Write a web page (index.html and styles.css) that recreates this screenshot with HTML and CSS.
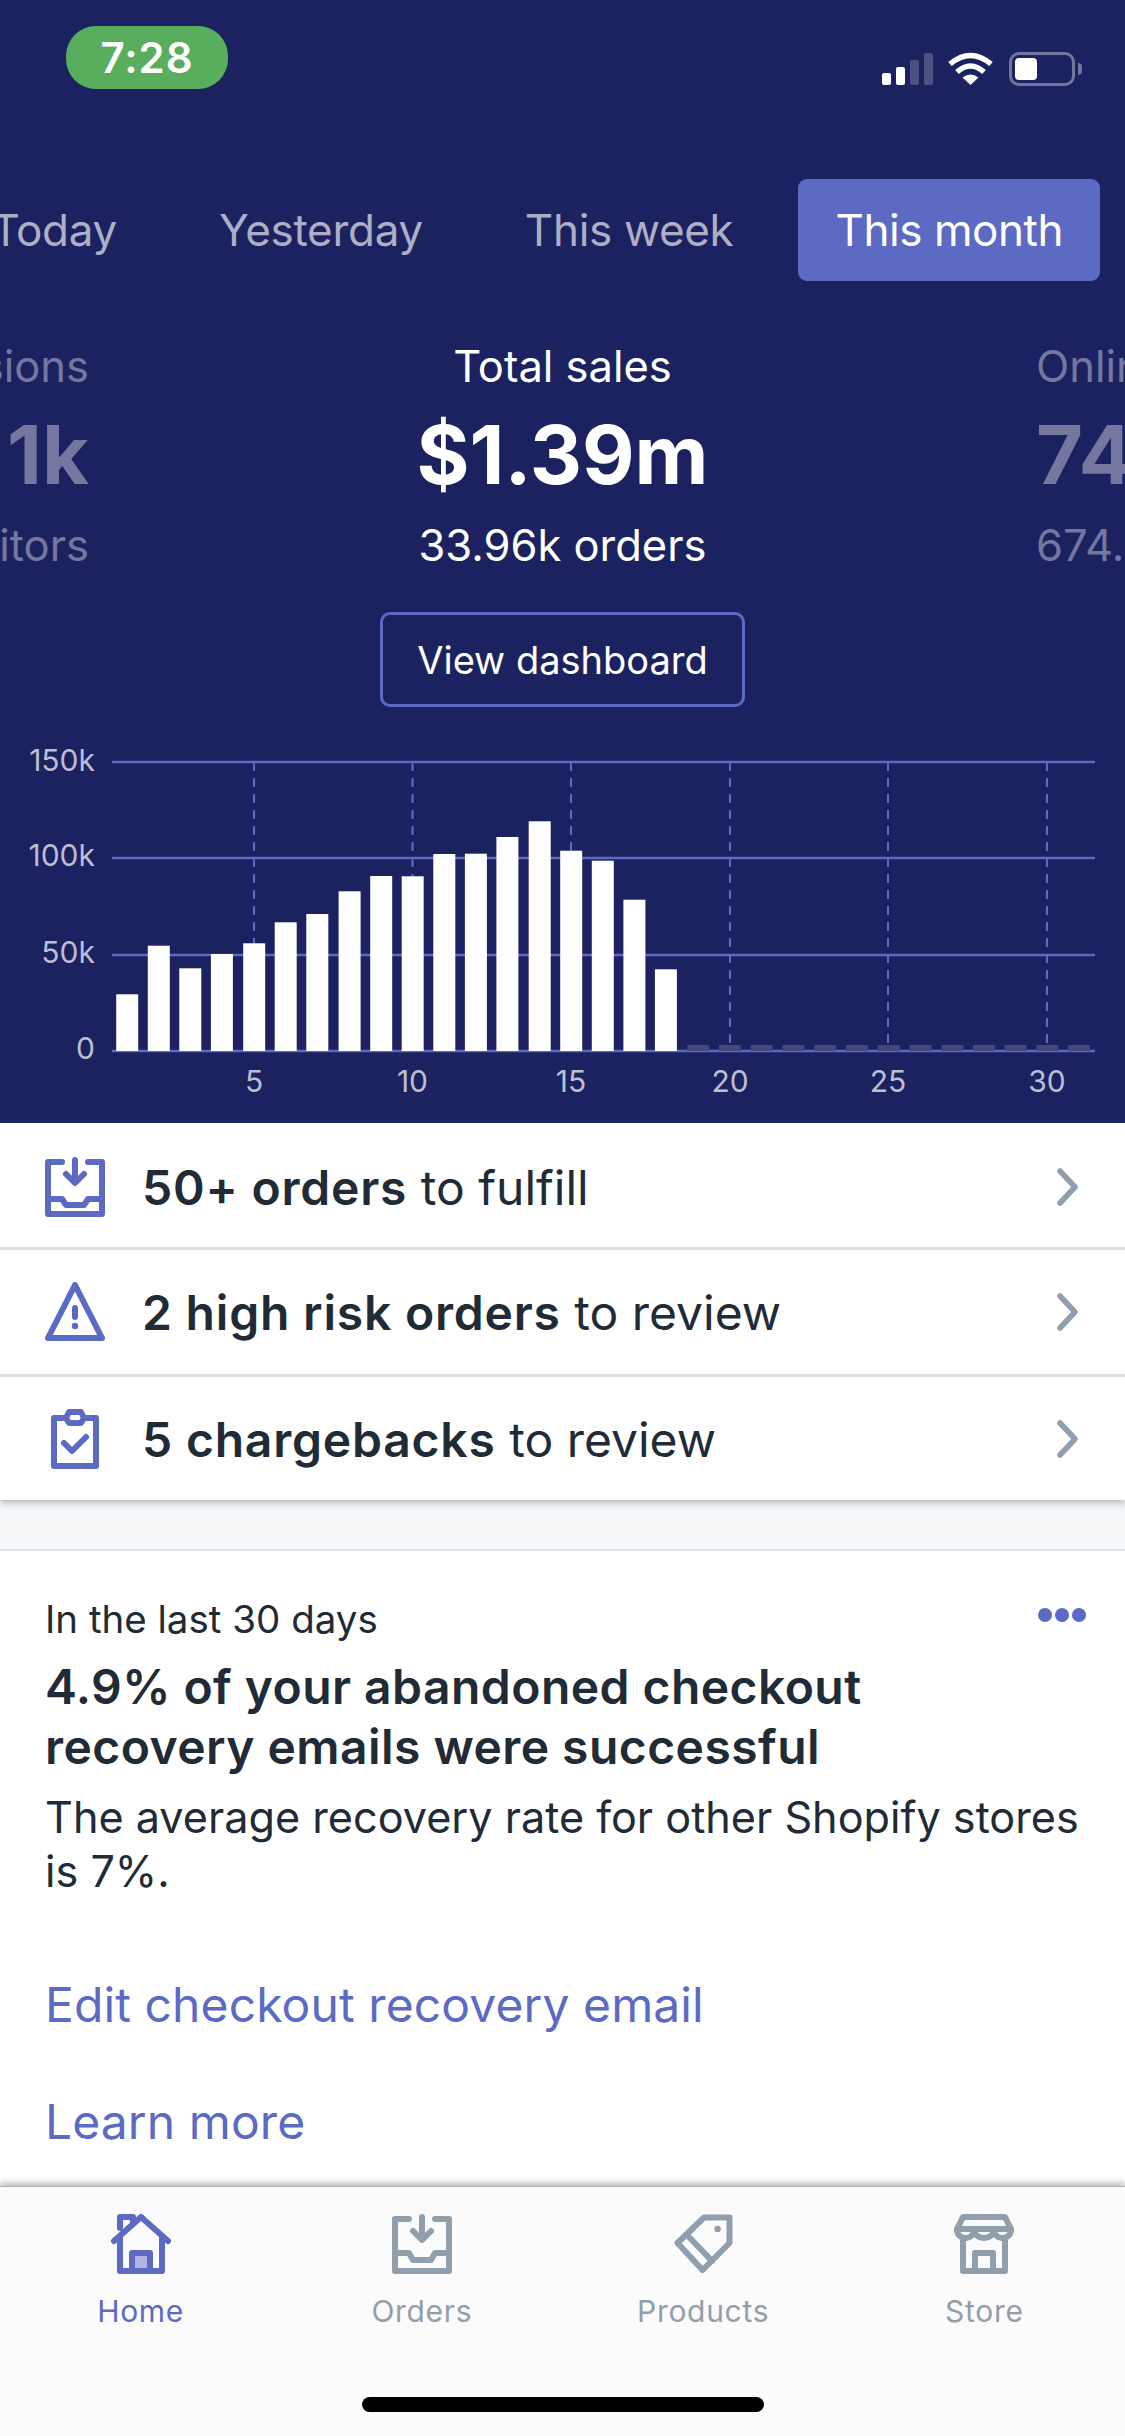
FILE: index.html
```html
<!DOCTYPE html>
<html lang="en">
<head>
    <meta charset="UTF-8">
    <meta name="viewport" content="width=device-width, initial-scale=1.0">
    <title>Home</title>
    <link rel="stylesheet" href="styles.css">
</head>
<body>
    <div class="hero">
        <div class="status-bar">
            <div class="time-pill">7:28</div>
            <div class="status-icons">
                <div class="signal">
                    <span class="sig-1"></span>
                    <span class="sig-2"></span>
                    <span class="sig-3"></span>
                    <span class="sig-4"></span>
                </div>
                <svg class="wifi" width="45" height="33" viewBox="0 0 45 33">
                    <path d="M2 12 Q22.5 -5 43 12" fill="none" stroke="#fff" stroke-width="5.5"/>
                    <path d="M9 20 Q22.5 8 36 20" fill="none" stroke="#fff" stroke-width="5.5"/>
                    <path d="M14.5 25.5 Q22.5 19.5 30.5 25.5 L22.5 33 Z" fill="#fff"/>
                </svg>
                <div class="battery"><div class="battery-fill"></div></div>
                <div class="battery-nub"></div>
            </div>
        </div>

        <div class="range-tabs">
            <div class="range-tab">Today</div>
            <div class="range-tab">Yesterday</div>
            <div class="range-tab">This week</div>
            <div class="range-tab active">This month</div>
        </div>

        <div class="stats">
            <div class="stat side left">
                <div class="stat-label">Sessions</div>
                <div class="stat-value">1k</div>
                <div class="stat-sub">Visitors</div>
            </div>
            <div class="stat main">
                <div class="stat-label">Total sales</div>
                <div class="stat-value">$1.39m</div>
                <div class="stat-sub">33.96k orders</div>
            </div>
            <div class="stat side right">
                <div class="stat-label">Online</div>
                <div class="stat-value">742k</div>
                <div class="stat-sub">674.2k</div>
            </div>
        </div>

        <div class="dashboard-wrap">
            <a class="dashboard-btn">View dashboard</a>
        </div>

        <svg class="chart" width="1125" height="400" viewBox="0 0 1125 400">
            <g class="grid-x">
                <line x1="254" y1="39" x2="254" y2="328"/>
                <line x1="412.5" y1="39" x2="412.5" y2="328"/>
                <line x1="571" y1="39" x2="571" y2="328"/>
                <line x1="730" y1="39" x2="730" y2="328"/>
                <line x1="888" y1="39" x2="888" y2="328"/>
                <line x1="1047" y1="39" x2="1047" y2="328"/>
            </g>
            <g class="grid-y">
                <line x1="112" y1="39" x2="1095" y2="39"/>
                <line x1="112" y1="135" x2="1095" y2="135"/>
                <line x1="112" y1="232" x2="1095" y2="232"/>
                <line x1="112" y1="328" x2="1095" y2="328"/>
            </g>
            <g class="bars">
                <rect x="116.2" y="271.3" width="22" height="56.7"/>
                <rect x="147.8" y="222.7" width="22" height="105.3"/>
                <rect x="179.3" y="245.3" width="22" height="82.7"/>
                <rect x="210.9" y="231" width="22" height="97"/>
                <rect x="243.2" y="220.3" width="22" height="107.7"/>
                <rect x="274.7" y="199.3" width="22" height="128.7"/>
                <rect x="306.3" y="191" width="22" height="137"/>
                <rect x="338.6" y="168.3" width="22" height="159.7"/>
                <rect x="370.2" y="153" width="22" height="175"/>
                <rect x="401.7" y="153.3" width="22" height="174.7"/>
                <rect x="433.3" y="131" width="22" height="197"/>
                <rect x="464.9" y="130.7" width="22" height="197.3"/>
                <rect x="496.4" y="114" width="22" height="214"/>
                <rect x="528.7" y="98.3" width="22" height="229.7"/>
                <rect x="560.2" y="127.7" width="22" height="200.3"/>
                <rect x="591.8" y="137.7" width="22" height="190.3"/>
                <rect x="623.4" y="176.7" width="22" height="151.3"/>
                <rect x="654.9" y="246.3" width="22" height="81.7"/>
            </g>
            <g class="ghost-bars">
                <rect x="687.2" y="322" width="22" height="6"/>
                <rect x="718.9" y="322" width="22" height="6"/>
                <rect x="750.7" y="322" width="22" height="6"/>
                <rect x="782.4" y="322" width="22" height="6"/>
                <rect x="814.2" y="322" width="22" height="6"/>
                <rect x="845.9" y="322" width="22" height="6"/>
                <rect x="877.7" y="322" width="22" height="6"/>
                <rect x="909.4" y="322" width="22" height="6"/>
                <rect x="941.2" y="322" width="22" height="6"/>
                <rect x="972.9" y="322" width="22" height="6"/>
                <rect x="1004.7" y="322" width="22" height="6"/>
                <rect x="1036.4" y="322" width="22" height="6"/>
                <rect x="1068" y="322" width="22" height="6"/>
            </g>
            <g class="axis-y">
                <text x="95" y="48">150k</text>
                <text x="95" y="143">100k</text>
                <text x="95" y="240">50k</text>
                <text x="95" y="336">0</text>
            </g>
            <g class="axis-x">
                <text x="254" y="369">5</text>
                <text x="412.5" y="369">10</text>
                <text x="571" y="369">15</text>
                <text x="730" y="369">20</text>
                <text x="888" y="369">25</text>
                <text x="1047" y="369">30</text>
            </g>
        </svg>
    </div>

    <div class="todo-list">
        <div class="todo-row first">
            <svg class="icon-60" viewBox="0 0 60 60">
                <path d="M17 5 H3 V57 H57 V5 H43 M3 42 H17 L21 48 H39 L43 42 H57 M30 3 V25 M21 17 L30 26 L39 17"/>
            </svg>
            <div class="todo-text"><b>50+ orders</b> to fulfill</div>
            <svg class="chevron" viewBox="0 0 21 38"><path d="M3 3 L18 19 L3 35"/></svg>
        </div>
        <div class="todo-row">
            <svg class="icon-60" viewBox="0 0 60 60">
                <path d="M30 3 L57 56 H3 Z M30 26 V35"/>
                <circle cx="30" cy="44" r="3.2"/>
            </svg>
            <div class="todo-text"><b>2 high risk orders</b> to review</div>
            <svg class="chevron" viewBox="0 0 21 38"><path d="M3 3 L18 19 L3 35"/></svg>
        </div>
        <div class="todo-row last">
            <svg class="icon-60" viewBox="0 0 60 60">
                <path d="M20 9 H9 V57 H51 V9 H40 M21 9 L24 3 H36 L39 9 L36 14 H24 Z M19 34 L27 42 L41 28"/>
            </svg>
            <div class="todo-text"><b>5 chargebacks</b> to review</div>
            <svg class="chevron" viewBox="0 0 21 38"><path d="M3 3 L18 19 L3 35"/></svg>
        </div>
    </div>

    <div class="gap"></div>

    <div class="insight-card">
        <div class="insight-head">
            <div class="insight-meta">In the last 30 days</div>
            <div class="more-dots"><span></span><span></span><span></span></div>
        </div>
        <div class="insight-title">4.9% of your abandoned checkout<br>recovery emails were successful</div>
        <div class="insight-body">The average recovery rate for other Shopify stores is 7%.</div>
        <a class="insight-link first">Edit checkout recovery email</a>
        <a class="insight-link">Learn more</a>
    </div>

    <div class="tab-bar">
        <div class="tabs">
            <div class="tab active">
                <svg class="icon-60" viewBox="0 0 60 60">
                    <path d="M21 57 V39 H39 V57" class="door-fill"/>
                    <path d="M3 27 L30 3 L57 27 M9 22 V57 H51 V22 M9 14 V3 H22 V9"/>
                </svg>
                <div class="tab-label">Home</div>
            </div>
            <div class="tab">
                <svg class="icon-60" viewBox="0 0 60 60">
                    <path d="M17 5 H3 V57 H57 V5 H43 M3 39 H17 L21 46 H39 L43 39 H57 M30 3 V25 M21 17 L30 26 L39 17"/>
                </svg>
                <div class="tab-label">Orders</div>
            </div>
            <div class="tab">
                <svg class="icon-60" viewBox="0 0 60 60">
                    <path d="M31 3.5 H56.5 V29 L29.6 56 L4.5 29 Z M16 23 L39 47"/>
                    <circle cx="44.6" cy="15" r="3.2"/>
                </svg>
                <div class="tab-label">Products</div>
            </div>
            <div class="tab">
                <svg class="icon-60" viewBox="0 0 60 60">
                    <path d="M9 3 H51 L57 15 H3 Z M3 15 V16 A8.5 8 0 0 0 20 16 A10 8 0 0 0 40 16 A8.5 8 0 0 0 57 16 V15 M9 24 V57 H51 V24 M21 57 V39 H39 V57"/>
                </svg>
                <div class="tab-label">Store</div>
            </div>
        </div>
        <div class="home-indicator"></div>
    </div>
</body>
</html>
```

FILE: styles.css
```css
body {
    font-family: Inter, "Noto Sans", sans-serif;
    margin: 0;
    width: 1125px;
    height: 2436px;
    overflow: hidden;
    display: flex;
    flex-direction: column;
    background: white;
    color: #212b36;
}
.hero {
    background: #1c2260;
    height: 1123px;
    flex: none;
    overflow: hidden;
}
.status-bar {
    display: flex;
    justify-content: space-between;
    align-items: flex-start;
    height: 179px;
    padding: 0 43px 0 66px;
    box-sizing: border-box;
}
.time-pill {
    margin-top: 26px;
    width: 162px;
    height: 63px;
    border-radius: 30px;
    background: #58ae5c;
    color: white;
    font-size: 42px;
    font-weight: 600;
    letter-spacing: 1px;
    line-height: 63px;
    text-align: center;
}
.status-icons {
    margin-top: 52px;
    display: flex;
    align-items: flex-end;
    height: 34px;
}
.signal {
    display: flex;
    align-items: flex-end;
    gap: 5px;
    margin-right: 15px;
    padding-bottom: 1px;
}
.signal span {
    width: 9px;
    border-radius: 2px;
    background: white;
}
.sig-1 { height: 12px; }
.sig-2 { height: 18px; }
.sig-3 { height: 25px; opacity: 0.22; }
.sig-4 { height: 32px; opacity: 0.22; }
.wifi {
    margin-right: 16px;
    margin-bottom: 1px;
}
.battery {
    width: 66px;
    height: 34px;
    box-sizing: border-box;
    border: 3px solid rgba(255, 255, 255, 0.38);
    border-radius: 10px;
    padding: 3px;
}
.battery-fill {
    width: 22px;
    height: 22px;
    background: white;
    border-radius: 4px;
}
.battery-nub {
    width: 4px;
    height: 12px;
    margin: 0 0 11px 3px;
    background: rgba(255, 255, 255, 0.38);
    border-radius: 0 4px 4px 0;
}
.range-tabs {
    display: flex;
    justify-content: flex-end;
    gap: 28px;
    padding-right: 25px;
    height: 102px;
}
.range-tab {
    flex: none;
    padding: 0 37px;
    font-size: 44px;
    letter-spacing: -0.3px;
    line-height: 102px;
    color: #adafc7;
    border-radius: 9px;
}
.range-tab.active {
    background: #5c6ac4;
    color: white;
    letter-spacing: -0.45px;
}
.stats {
    display: flex;
    justify-content: center;
    margin-top: 55px;
    overflow: hidden;
}
.stat {
    flex: none;
    color: white;
}
.stat.main {
    width: 947px;
    text-align: center;
}
.stat.side {
    width: 400px;
    color: #7577a0;
}
.stat.left {
    text-align: right;
}
.stat-label, .stat-sub {
    font-size: 43.5px;
    line-height: 60px;
}
.stat-value {
    font-size: 81px;
    font-weight: 700;
    line-height: 100px;
    margin: 9px 0 10px;
}
.dashboard-wrap {
    display: flex;
    justify-content: center;
    margin-top: 37px;
}
.dashboard-btn {
    width: 365px;
    height: 95px;
    box-sizing: border-box;
    border: 3px solid #5c6ac4;
    border-radius: 10px;
    color: white;
    font-size: 38px;
    line-height: 91px;
    text-align: center;
}
.chart {
    display: block;
    margin-top: 16px;
}
.grid-x line {
    stroke: #5c6ac4;
    stroke-width: 2;
    stroke-dasharray: 9 7;
}
.grid-y line {
    stroke: #5c6ac4;
    stroke-width: 2.5;
}
.bars rect {
    fill: white;
}
.ghost-bars rect {
    fill: #44487f;
}
.axis-y text, .axis-x text {
    font-size: 30px;
    fill: #bcbed3;
}
.axis-y text {
    text-anchor: end;
}
.axis-x text {
    text-anchor: middle;
}
.todo-list {
    flex: none;
    position: relative;
    background: white;
    box-shadow: 0 3px 6px rgba(99, 115, 129, 0.45);
}
.todo-row {
    display: flex;
    align-items: center;
    height: 127px;
    box-sizing: border-box;
    padding: 0 47px 0 45px;
    border-bottom: 3px solid #dfe3e8;
}
.todo-row.first {
    padding-top: 3px;
}
.todo-row.last {
    height: 123px;
    border-bottom: none;
}
.icon-60 {
    width: 60px;
    height: 60px;
    flex: none;
    fill: none;
    stroke: #5c6ac4;
    stroke-width: 6;
    stroke-linecap: round;
    stroke-linejoin: round;
}
.icon-60 circle {
    fill: #5c6ac4;
    stroke: none;
}
.todo-text {
    flex: 1;
    margin-left: 37px;
    padding-top: 1px;
    font-size: 48px;
    color: #212b36;
}
.todo-text b {
    font-weight: 600;
    letter-spacing: 0.8px;
}
.chevron {
    width: 21px;
    height: 38px;
    flex: none;
    fill: none;
    stroke: #919eab;
    stroke-width: 5.5;
    stroke-linecap: round;
    stroke-linejoin: round;
}
.gap {
    flex: none;
    height: 49px;
    background: #f4f6f8;
    border-bottom: 2px solid #dfe3e8;
}
.insight-card {
    flex: 1;
    overflow: hidden;
    padding: 43px 39px 0 45px;
}
.insight-head {
    display: flex;
    justify-content: space-between;
    align-items: flex-start;
}
.insight-meta {
    font-size: 38.5px;
    line-height: 50px;
}
.more-dots {
    display: flex;
    gap: 3px;
    margin-top: 14px;
}
.more-dots span {
    width: 14px;
    height: 14px;
    border-radius: 50%;
    background: #5c6ac4;
}
.insight-title {
    margin-top: 13px;
    font-size: 48px;
    font-weight: 600;
    letter-spacing: 0.45px;
    line-height: 60px;
}
.insight-body {
    margin-top: 13px;
    font-size: 43.2px;
    line-height: 54px;
}
.insight-link {
    display: block;
    margin-top: 57px;
    font-size: 48px;
    letter-spacing: 0.1px;
    line-height: 60px;
    color: #5c6ac4;
}
.insight-link.first {
    margin-top: 77px;
}
.tab-bar {
    flex: none;
    position: relative;
    height: 250px;
    box-sizing: border-box;
    display: flex;
    flex-direction: column;
    background: #fbfbfb;
    border-top: 1px solid #b2b2b2;
    box-shadow: 0 -3px 6px rgba(99, 115, 129, 0.5);
}
.tabs {
    display: flex;
    padding-top: 27px;
}
.tab {
    flex: 1;
    display: flex;
    flex-direction: column;
    align-items: center;
}
.tab .icon-60 {
    stroke: #919eab;
}
.tab .icon-60 circle {
    fill: #919eab;
}
.tab-label {
    margin-top: 17px;
    font-size: 30px;
    line-height: 40px;
    letter-spacing: 0.7px;
    color: #919eab;
}
.tab.active .icon-60 {
    stroke: #5c6ac4;
}
.tab.active .door-fill {
    fill: #b0b6e0;
}
.tab.active .tab-label {
    color: #5c6ac4;
}
.home-indicator {
    width: 402px;
    height: 15px;
    margin: auto auto 24px;
    border-radius: 8px;
    background: black;
}
```
